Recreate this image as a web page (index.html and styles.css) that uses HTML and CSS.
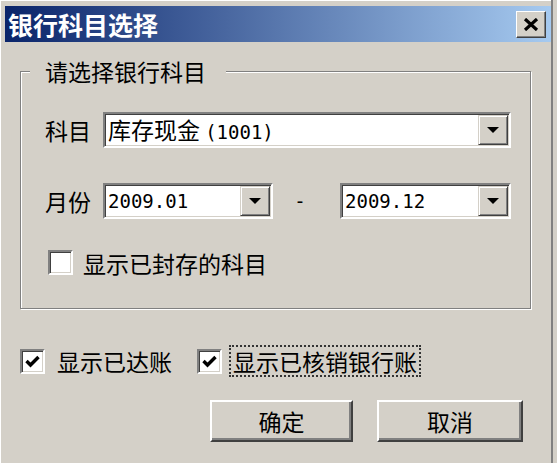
FILE: index.html
```html
<!DOCTYPE html>
<html lang="zh-CN">
<head>
    <meta charset="UTF-8">
    <title>银行科目选择</title>
    <link rel="stylesheet" href="styles.css">
</head>
<body>
    <div class="window">
        <div class="titlebar">
            <span class="title">银行科目选择</span>
            <button class="close">
                <svg width="16" height="13" viewBox="0 0 16 13">
                    <path d="M2 1 L14 12 M14 1 L2 12" stroke="#000" stroke-width="3.2" fill="none"/>
                </svg>
            </button>
        </div>
        <div class="content">
            <fieldset class="group">
                <legend>请选择银行科目</legend>
                <div class="group-body">
                    <div class="row row-subject">
                        <span class="label">科目</span>
                        <div class="combo combo-wide">
                            <span class="value">库存现金 <span class="num">(1001)</span></span>
                            <span class="drop"></span>
                        </div>
                    </div>
                    <div class="row row-month">
                        <span class="label">月份</span>
                        <div class="combo combo-from">
                            <span class="value num">2009.01</span>
                            <span class="drop"></span>
                        </div>
                        <span class="dash num">-</span>
                        <div class="combo combo-to">
                            <span class="value num">2009.12</span>
                            <span class="drop"></span>
                        </div>
                    </div>
                    <div class="row row-check">
                        <span class="check check-archived"></span>
                        <span class="check-text">显示已封存的科目</span>
                    </div>
                </div>
            </fieldset>
            <div class="checks">
                <span class="check">
                    <svg width="15" height="13" viewBox="0 0 15 13"><path d="M1.5 6 L5.5 10 L13.5 2" stroke="#000" stroke-width="3.4" fill="none"/></svg>
                </span>
                <span class="check-text reconciled">显示已达账</span>
                <span class="check">
                    <svg width="15" height="13" viewBox="0 0 15 13"><path d="M1.5 6 L5.5 10 L13.5 2" stroke="#000" stroke-width="3.4" fill="none"/></svg>
                </span>
                <span class="check-text focused">显示已核销银行账</span>
            </div>
            <div class="buttons">
                <button class="btn btn-ok">确定</button>
                <button class="btn btn-cancel">取消</button>
            </div>
        </div>
    </div>
</body>
</html>
```

FILE: styles.css
```css
body {
    margin: 0;
    background-color: #d4d0c8;
    font-family: "Noto Sans CJK SC", sans-serif;
    font-size: 23px;
    color: #000;
}
.window {
    width: 553px;
    height: 463px;
    box-sizing: border-box;
    padding: 6px 0 0 5px;
    border-right: 2px solid #808080;
    box-shadow: inset 1px 1px 0 #fff;
    overflow: hidden;
}
.titlebar {
    height: 36px;
    display: flex;
    align-items: center;
    justify-content: space-between;
    padding: 0 5px 0 3px;
    background: linear-gradient(to right, #0a246a, #a6caf0);
}
.title {
    color: #fff;
    font-weight: bold;
    font-size: 25px;
    line-height: 36px;
}
.close {
    width: 30px;
    height: 27px;
    box-sizing: border-box;
    padding: 0;
    background-color: #d4d0c8;
    border: 1px solid;
    border-color: #fff #404040 #404040 #fff;
    box-shadow: inset -1px -1px 0 #808080;
    display: flex;
    align-items: center;
    justify-content: center;
}
.content {
    padding: 15px 20px 0 15px;
}
.group {
    margin: 0;
    padding: 0;
    border: 1px solid #808080;
    box-shadow: 1px 1px 0 #fff, inset 1px 1px 0 #fff;
}
.group legend {
    margin-left: 9px;
    padding: 0 20px 0 15px;
    line-height: 28px;
    background-color: #d4d0c8;
}
.group-body {
    padding: 27px 19px 33px 24px;
}
.row {
    display: flex;
    align-items: center;
}
.row-subject,
.row-month {
    height: 36px;
}
.row-month {
    margin-top: 35px;
}
.row-check {
    margin-top: 31px;
    height: 25px;
}
.label {
    width: 46px;
    margin-right: 12px;
    line-height: 1;
}
.combo {
    height: 36px;
    box-sizing: border-box;
    padding: 1px;
    background-color: #fff;
    border: 2px solid;
    border-color: #808080 #fff #fff #808080;
    box-shadow: inset 1px 1px 0 #404040, inset -1px -1px 0 #d4d0c8;
    display: flex;
    align-items: center;
}
.combo-wide {
    flex: 1;
}
.combo-from {
    width: 170px;
}
.combo-to {
    width: 171px;
}
.value {
    flex: 1;
    padding-left: 2px;
    line-height: 1;
    white-space: nowrap;
}
.num {
    font-family: "DejaVu Sans Mono", monospace;
    font-size: 19px;
}
.drop {
    width: 30px;
    height: 100%;
    box-sizing: border-box;
    background-color: #d4d0c8;
    border: 1px solid;
    border-color: #d4d0c8 #404040 #404040 #d4d0c8;
    box-shadow: inset 1px 1px 0 #fff, inset -1px -1px 0 #808080;
    display: flex;
    align-items: center;
    justify-content: center;
}
.drop::after {
    content: "";
    border-left: 6px solid transparent;
    border-right: 6px solid transparent;
    border-top: 6px solid #000;
}
.dash {
    width: 30px;
    margin: 0 25px 0 12px;
    text-align: center;
}
.check {
    width: 25px;
    height: 25px;
    box-sizing: border-box;
    background-color: #fff;
    border: 2px solid;
    border-color: #808080 #fff #fff #808080;
    box-shadow: inset 1px 1px 0 #404040, inset -1px -1px 0 #d4d0c8;
    display: flex;
    align-items: center;
    justify-content: center;
}
.check-archived {
    margin: 0 10px 0 3px;
}
.check-text {
    line-height: 28px;
}
.checks {
    display: flex;
    align-items: center;
    height: 32px;
    margin-top: 36px;
}
.checks .check {
    margin-right: 12px;
}
.reconciled {
    margin-right: 25px;
}
.focused {
    margin-left: -5px;
    padding: 0 2px;
    border: 2px dotted #333;
}
.buttons {
    display: flex;
    justify-content: flex-end;
    gap: 24px;
    margin-top: 23px;
    padding-right: 8px;
}
.btn {
    height: 42px;
    box-sizing: border-box;
    padding: 0;
    font: inherit;
    color: #000;
    background-color: #d4d0c8;
    border: 2px solid;
    border-color: #fff #404040 #404040 #fff;
    box-shadow: inset -2px -2px 0 #808080;
}
.btn-ok {
    width: 143px;
}
.btn-cancel {
    width: 146px;
}
```
